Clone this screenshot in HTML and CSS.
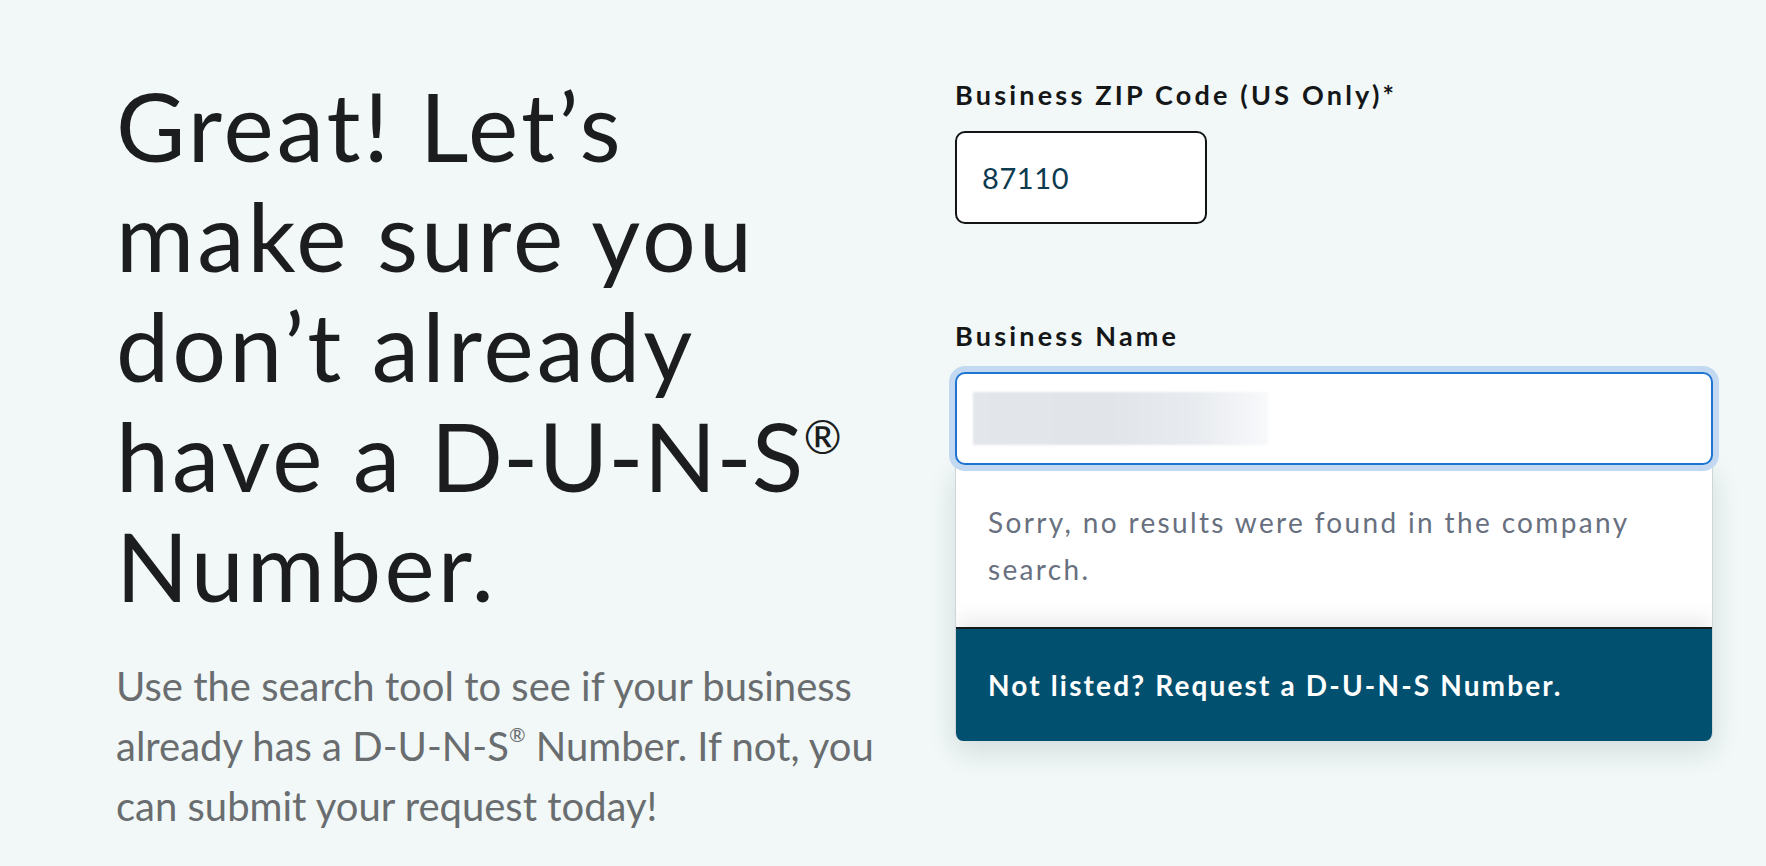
FILE: index.html
```html
<!DOCTYPE html>
<html lang="en">
<head>
<meta charset="utf-8">
<title>Search D-U-N-S Number</title>
<link rel="stylesheet" href="styles.css">
</head>
<body>
<main class="page">
  <section class="intro">
    <h1 class="headline">Great! Let’s<br>make sure you<br>don’t already<br>have a <span class="duns">D-U-N-S</span><sup class="reg">®</sup><br>Number.</h1>
    <p class="lead">Use the search tool to see if your business<br>already has a D-U-N-S<sup class="reg-small">®</sup> Number. If not, you<br>can submit your request today!</p>
  </section>
  <section class="form">
    <div class="field field-zip">
      <label class="label">Business ZIP Code (US Only)*</label>
      <div class="input input-zip"><span class="value">87110</span></div>
    </div>
    <div class="field field-name">
      <label class="label">Business Name</label>
      <div class="input input-name"><span class="blurred"></span></div>
      <div class="dropdown">
        <div class="empty">Sorry, no results were found in the company search.</div>
        <div class="request">Not listed? Request a D-U-N-S Number.</div>
      </div>
    </div>
  </section>
</main>
</body>
</html>
```
FILE: styles.css
```css
* { box-sizing: border-box; }
html, body {
  margin: 0;
  padding: 0;
  background: #f1f8f7;
  font-family: "Lato", "Noto Sans", sans-serif;
  -webkit-font-smoothing: antialiased;
}
.page {
  display: flex;
  padding: 70px 0 0 116px;
  min-height: 866px;
}
.intro {
  width: 839px;
  flex: none;
}
.headline {
  margin: 0;
  font-weight: 400;
  font-size: 95px;
  line-height: 110px;
  color: #1b1d1e;
  letter-spacing: 3.1px;
}
.duns {
  letter-spacing: 0.1px;
}
.reg {
  font-size: 46px;
  vertical-align: top;
  line-height: 1;
  position: relative;
  top: 14px;
  letter-spacing: 0;
}
.lead {
  margin: 36px 0 0;
  font-size: 40px;
  line-height: 60px;
  color: #6a6d6f;
}
.reg-small {
  font-size: 20px;
  vertical-align: top;
  line-height: 1;
  position: relative;
  top: 8px;
}
.form {
  width: 758px;
  flex: none;
  padding-top: 9px;
}
.label {
  display: block;
  font-size: 27px;
  line-height: 32px;
  font-weight: 700;
  color: #141617;
  letter-spacing: 3.2px;
  margin-bottom: 20px;
}
.input {
  height: 93px;
  background: #fff;
  border-radius: 10px;
  display: flex;
  align-items: center;
}
.input-zip {
  width: 252px;
  border: 2px solid #121416;
  padding-left: 25px;
}
.value {
  font-size: 29px;
  color: #0c3a4f;
  letter-spacing: 0.6px;
}
.field-name {
  margin-top: 96px;
}
.input-name {
  width: 758px;
  border: 2px solid #1f74d1;
  box-shadow: 0 0 0 6px #c3d9f2;
  padding-left: 16px;
  position: relative;
  z-index: 1;
}
.blurred {
  display: block;
  width: 295px;
  height: 53px;
  background: linear-gradient(90deg, #e3e6ea 0%, #e1e4e8 45%, #e8ebef 75%, #f8f9fb 100%);
  filter: blur(1px);
}
.dropdown {
  width: 758px;
  background: #fff;
  border-left: 1px solid #cfd4da;
  border-right: 1px solid #cfd4da;
  border-radius: 0 0 8px 8px;
  box-shadow: 0 10px 28px rgba(30, 50, 60, 0.14);
  overflow: hidden;
}
.empty {
  padding: 34px 40px 34px 32px;
  font-size: 28px;
  line-height: 47px;
  color: #687080;
  letter-spacing: 2.35px;
}
.request {
  height: 114px;
  display: flex;
  align-items: center;
  padding-left: 32px;
  background: #02506f;
  border-top: 2px solid #151a1d;
  box-shadow: 0 -10px 18px rgba(0, 0, 0, 0.07);
  color: #ffffff;
  font-size: 28px;
  font-weight: 700;
  letter-spacing: 2.15px;
}
```
